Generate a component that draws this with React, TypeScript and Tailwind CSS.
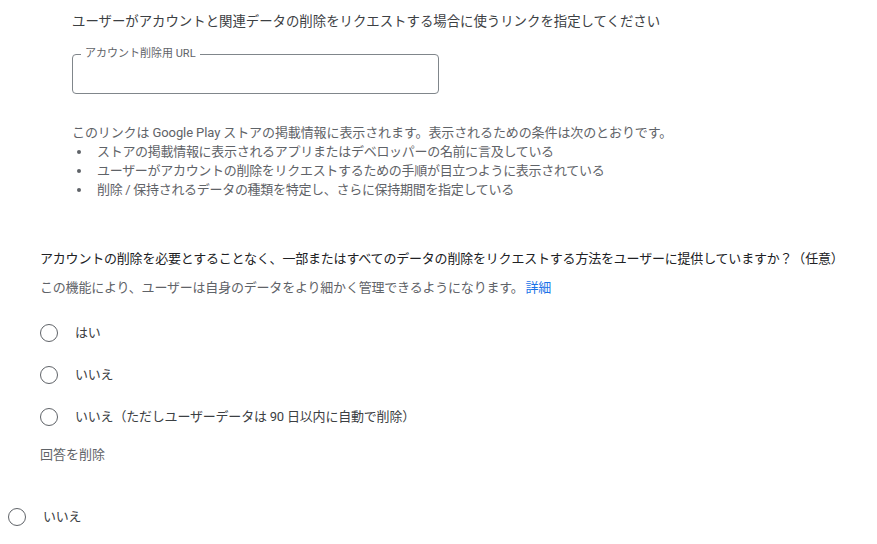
import React from 'react';

const font = "font-['Roboto','Noto_Sans_CJK_JP',sans-serif]";

function Radio({ label }: { label: string }) {
  return (
    <label className="flex items-center h-[42px] cursor-pointer">
      <span className="w-[18px] h-[18px] rounded-full border-[1.5px] border-[#5f6368] block shrink-0" />
      <span className="ml-[17px] text-[13px] leading-[18px] tracking-[-0.2px] text-[#3c4043]">{label}</span>
    </label>
  );
}

export default function App() {
  const bullets = [
    'ストアの掲載情報に表示されるアプリまたはデベロッパーの名前に言及している',
    'ユーザーがアカウントの削除をリクエストするための手順が目立つように表示されている',
    '削除 / 保持されるデータの種類を特定し、さらに保持期間を指定している',
  ];

  return (
    <div className={`w-[877px] h-[544px] overflow-hidden bg-white ${font}`}>
      {/* deletion URL block */}
      <div className="pl-[72px] pt-[12px]">
        <p className="text-[13.4px] leading-[19px] text-[#3c4043]">
          ユーザーがアカウントと関連データの削除をリクエストする場合に使うリンクを指定してください
        </p>
        <div className="relative mt-[23px] w-[367px] h-[40px] border border-[#80868b] rounded-[4px]">
          <span className="absolute -top-[8px] left-[8px] px-[4px] bg-white text-[11px] leading-[14px] text-[#5f6368]">
            アカウント削除用 URL
          </span>
        </div>
        <p className="mt-[29px] text-[13px] leading-[19px] tracking-[-0.1px] text-[#5f6368]">
          このリンクは Google Play ストアの掲載情報に表示されます。表示されるための条件は次のとおりです。
        </p>
        <ul className="text-[13px] leading-[19px] tracking-[-0.3px] text-[#5f6368]">
          {bullets.map((b) => (
            <li key={b} className="flex items-center">
              <span className="w-[25px] pl-[5px] flex">
                <span className="w-[4px] h-[4px] rounded-full bg-[#5f6368]" />
              </span>
              <span>{b}</span>
            </li>
          ))}
        </ul>
      </div>

      {/* partial data deletion question */}
      <div className="pl-[40px] mt-[51px]">
        <p className="text-[13px] leading-[18px] tracking-[-0.2px] text-[#202124]">
          アカウントの削除を必要とすることなく、一部またはすべてのデータの削除をリクエストする方法をユーザーに提供していますか？（任意）
        </p>
        <p className="mt-[11px] text-[13px] leading-[18px] tracking-[-0.2px] text-[#5f6368]">
          この機能により、ユーザーは自身のデータをより細かく管理できるようになります。
          <a className="ml-[2px] text-[#1a73e8]" href="#">詳細</a>
        </p>
        <div className="mt-[15px]">
          <Radio label="はい" />
          <Radio label="いいえ" />
          <Radio label="いいえ（ただしユーザーデータは 90 日以内に自動で削除）" />
        </div>
        <button className="mt-[8px] text-[13px] leading-[18px] text-[#5f6368]">回答を削除</button>
      </div>

      <div className="pl-[8px] mt-[30px]">
        <Radio label="いいえ" />
      </div>
    </div>
  );
}
